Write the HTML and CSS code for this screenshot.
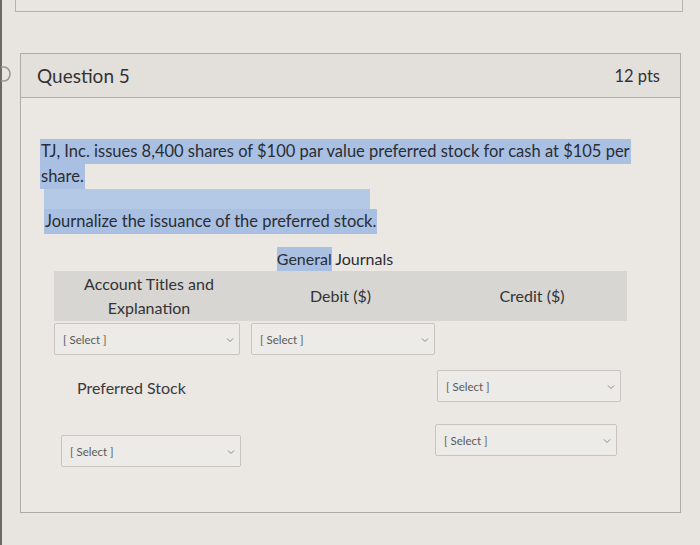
FILE: index.html
```html
<!DOCTYPE html>
<html>
<head>
<meta charset="utf-8">
<link rel="stylesheet" href="styles.css">
</head>
<body>
<div class="page">
  <div class="bezel"></div>
  <div class="content">
    <div class="prev-box"></div>
    <div class="card">
      <svg class="flag" width="12" height="18" viewBox="0 0 12 18"><path d="M-2 2 H3 A6 7 0 0 1 3 16 H-2" fill="none" stroke="#9a9894" stroke-width="1.6"/></svg>
      <div class="card-head">
        <span class="q-title">Question 5</span>
        <span class="q-pts">12 pts</span>
      </div>
      <div class="card-body">
        <p class="q-text"><span class="hl">TJ, Inc. issues 8,400 shares of $100 par value preferred stock for cash at $105 per</span><br><span class="hl">share.</span></p>
        <div class="hl-gap"></div>
        <p class="q-task"><span class="hl">Journalize the issuance of the preferred stock.</span></p>
        <div class="gj-title"><span class="hl">General</span> Journals</div>
        <div class="journal">
          <div class="jh">Account Titles and<br>Explanation</div>
          <div class="jh">Debit ($)</div>
          <div class="jh">Credit ($)</div>

          <div class="row r1">
            <div class="sel">[ Select ]<svg class="chev" width="8" height="6" viewBox="0 0 8 6"><path d="M1 1.5 L4 4.5 L7 1.5" fill="none" stroke="#888" stroke-width="1"/></svg></div>
            <div class="sel s2">[ Select ]<svg class="chev" width="8" height="6" viewBox="0 0 8 6"><path d="M1 1.5 L4 4.5 L7 1.5" fill="none" stroke="#888" stroke-width="1"/></svg></div>
            <div></div>
          </div>

          <div class="row r2">
            <div class="acct">Preferred Stock</div>
            <div></div>
            <div class="sel s3">[ Select ]<svg class="chev" width="8" height="6" viewBox="0 0 8 6"><path d="M1 1.5 L4 4.5 L7 1.5" fill="none" stroke="#888" stroke-width="1"/></svg></div>
          </div>

          <div class="row r3">
            <div class="sel s4">[ Select ]<svg class="chev" width="8" height="6" viewBox="0 0 8 6"><path d="M1 1.5 L4 4.5 L7 1.5" fill="none" stroke="#888" stroke-width="1"/></svg></div>
            <div></div>
            <div class="sel s5">[ Select ]<svg class="chev" width="8" height="6" viewBox="0 0 8 6"><path d="M1 1.5 L4 4.5 L7 1.5" fill="none" stroke="#888" stroke-width="1"/></svg></div>
          </div>
        </div>
      </div>
    </div>
  </div>
</div>
</body>
</html>
```
FILE: styles.css
```css
html, body {
  margin: 0;
  padding: 0;
  width: 700px;
  height: 545px;
  overflow: hidden;
  background: #e8e5e0;
  font-family: Lato, "Open Sans", sans-serif;
  color: #3a3a3c;
}
.page {
  display: flex;
  height: 545px;
}
.bezel {
  width: 2px;
  background: #6b6966;
  flex: none;
}
.content {
  flex: 1;
}
.prev-box {
  margin-left: 13px;
  width: 666px;
  height: 11px;
  border: 1px solid #b5b2ad;
  border-top: none;
  background: #e9e6e1;
}
.card {
  position: relative;
  margin-top: 41px;
  margin-left: 18px;
  width: 659px;
  height: 458px;
  border: 1px solid #aeaba6;
  background: #ebe8e3;
}
.flag {
  position: absolute;
  left: -20px;
  top: 11px;
}
.card-head {
  height: 43px;
  background: #e3e0db;
  border-bottom: 1px solid #b2afaa;
  display: flex;
  align-items: center;
  justify-content: space-between;
  padding: 0 20px 0 16px;
}
.q-title {
  font-size: 19px;
  color: #333235;
}
.q-pts {
  font-size: 16.5px;
  color: #333235;
}
.card-body {
  padding: 41px 0 0 19px;
}
.q-text {
  margin: 0;
  font-size: 16.5px;
  line-height: 25px;
  color: #2a2d33;
}
.hl {
  background: #a9c0e2;
  padding: 2px 1px 3px;
}
.hl-gap {
  margin-left: 4px;
  width: 326px;
  height: 20px;
  background: #b4c9e6;
}
.q-task {
  margin: 0 0 0 4px;
  font-size: 16.5px;
  line-height: 25px;
  color: #2a2d33;
}
.gj-title {
  margin-top: 14px;
  margin-left: 235px;
  width: 120px;
  text-align: center;
  font-size: 16px;
  line-height: 22px;
  color: #2a2d33;
}
.gj-title .hl {
  padding: 2px 0 3px;
}
.journal {
  margin-top: 1px;
  margin-left: 14px;
  width: 573px;
  display: grid;
  grid-template-columns: 190px 193px 190px;
}
.jh {
  background: #d8d6d2;
  height: 50px;
  display: flex;
  align-items: center;
  justify-content: center;
  text-align: center;
  font-size: 16px;
  line-height: 24px;
  color: #333335;
}
.row {
  display: contents;
}
.sel {
  position: relative;
  box-sizing: border-box;
  height: 32px;
  border: 1px solid #c8c5c0;
  border-radius: 2px;
  background: #ecebe7;
  font-size: 11.5px;
  color: #5a5a5a;
  display: flex;
  align-items: center;
  padding-left: 8px;
}
.chev {
  position: absolute;
  right: 5px;
  top: 13px;
}
.r1 > .sel {
  margin-top: 2px;
  width: 186px;
}
.r1 > .s2 {
  margin-left: 7px;
  width: 184px;
}
.acct {
  margin-top: 23px;
  padding-left: 23px;
  font-size: 16px;
  line-height: 20px;
  color: #3a393b;
}
.s3 {
  margin-top: 15px;
  width: 184px;
}
.s4 {
  margin-top: 33px;
  margin-left: 7px;
  width: 180px;
}
.s5 {
  margin-top: 22px;
  margin-left: -2px;
  width: 182px;
}
```
